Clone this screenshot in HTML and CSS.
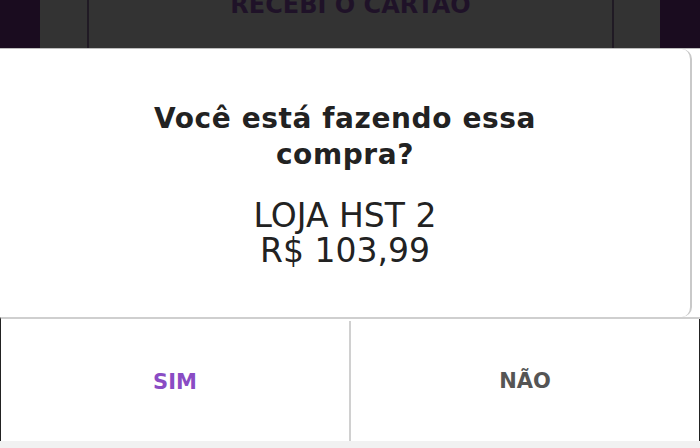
FILE: index.html
```html
<!DOCTYPE html>
<html lang="pt-BR">
<head>
<meta charset="UTF-8" />
<meta name="viewport" content="width=device-width, initial-scale=1.0" />
<title>Confirmar compra</title>
<link rel="stylesheet" href="styles.css">
</head>
<body>
<div class="screen">
  <div class="backdrop">
    <div class="side"></div>
    <div class="middle">
      <div class="card-btn"><span>RECEBI O CARTÃO</span></div>
    </div>
    <div class="side"></div>
  </div>

  <div class="dialog">
    <div class="body">
      <div class="body-inner">
        <h1>Você está fazendo essa<br>compra?</h1>
        <div class="purchase">
          <div>LOJA HST 2</div>
          <div>R$ 103,99</div>
        </div>
      </div>
    </div>
    <div class="actions">
      <button class="act yes">SIM</button>
      <button class="act no">NÃO</button>
    </div>
  </div>
  <div class="footer"></div>
</div>
</body>
</html>
```

FILE: styles.css
```css
* { box-sizing: border-box; margin: 0; padding: 0; }
body { font-family: "DejaVu Sans", "Open Sans", sans-serif; background: #fff; width: 700px; height: 448px; overflow: hidden; }
.screen { display: flex; flex-direction: column; height: 448px; }

.backdrop { display: flex; height: 48px; overflow: hidden; flex-shrink: 0; }
.side { width: 40px; background: #1a0c1f; }
.middle { flex: 1; background: #333333; padding: 0 46px 0 47px; }
.card-btn { height: 54px; border: 2px solid #201a24; border-top: none; border-radius: 0 0 6px 6px; text-align: center; overflow: hidden; }
.card-btn span { display: block; margin-top: -10px; font-size: 24px; font-weight: 700; color: #1f1228; line-height: 30px; }

.dialog { flex: 1; display: flex; flex-direction: column; border-top: 1px solid #bdbdbd; }
.body { height: 268px; padding-right: 8px; }
.body-inner { height: 100%; border-right: 2px solid #c9c9c9; border-radius: 0 10px 10px 0; padding-top: 52px; text-align: center; }
.body-inner h1 { font-size: 28px; line-height: 36px; font-weight: 700; color: #222; letter-spacing: 0.6px; }
.purchase { margin-top: 25px; font-size: 33px; line-height: 35px; font-weight: 400; color: #222; }

.actions { flex: 1; display: flex; border-top: 2px solid #cfcfcf; border-left: 1px solid #222; }
.act { flex: 1; background: #fff; border: none; font-family: inherit; font-size: 21px; font-weight: 700; padding-top: 2px; }
.act.yes { color: #8a4cc4; border-right: 2px solid #d0d0d0; margin-top: 2px; }
.act.no { color: #555; border-right: 1px solid #222; }

.footer { height: 7px; background: #f1f1f1; flex-shrink: 0; }
```
